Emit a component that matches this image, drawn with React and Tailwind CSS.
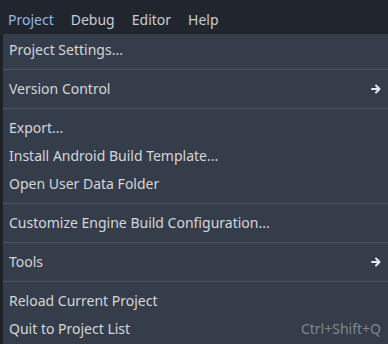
import React from 'react';

const font = { fontFamily: '"Noto Sans", "Open Sans", sans-serif' };

function Arrow() {
  return (
    <svg width="10" height="10" viewBox="0 0 10 10" className="text-[#e6e8eb]">
      <path d="M1 5h7M5 1.5L8.5 5L5 8.5" fill="none" stroke="currentColor" strokeWidth="2" strokeLinecap="round" strokeLinejoin="round" />
    </svg>
  );
}

function Item({ label, arrow, shortcut }) {
  return (
    <div className="h-[28px] flex items-center justify-between pl-[6px] pr-[7px] pb-[1px] text-[14px] text-[#d3d6db]">
      <span>{label}</span>
      {arrow && <Arrow />}
      {shortcut && <span className="text-[#80858e]">{shortcut}</span>}
    </div>
  );
}

function Sep() {
  return (
    <div className="h-[11px] flex items-center">
      <div className="h-px w-full bg-[#4b5261]" />
    </div>
  );
}

export default function App() {
  const top = ['Project', 'Debug', 'Editor', 'Help'];
  return (
    <div className="w-[388px] h-[344px] overflow-hidden bg-[#21262e] flex flex-col" style={font}>
      <div className="h-[34px] flex items-center gap-[17px] pl-[8px] pt-[4px] text-[14px] text-[#c9ccd1]">
        {top.map((t, i) => (
          <span key={t} className={i === 0 ? 'text-[#8fb9e6]' : ''}>{t}</span>
        ))}
      </div>
      <div className="flex flex-1">
        <div className="w-[3px] bg-[#1d2128]" />
        <div className="flex-1 bg-[#363d4a] pt-[2px]">
          <Item label="Project Settings..." />
          <Sep />
          <Item label="Version Control" arrow />
          <Sep />
          <Item label="Export..." />
          <Item label="Install Android Build Template..." />
          <Item label="Open User Data Folder" />
          <Sep />
          <Item label="Customize Engine Build Configuration..." />
          <Sep />
          <Item label="Tools" arrow />
          <Sep />
          <Item label="Reload Current Project" />
          <Item label="Quit to Project List" shortcut="Ctrl+Shift+Q" />
        </div>
      </div>
    </div>
  );
}
